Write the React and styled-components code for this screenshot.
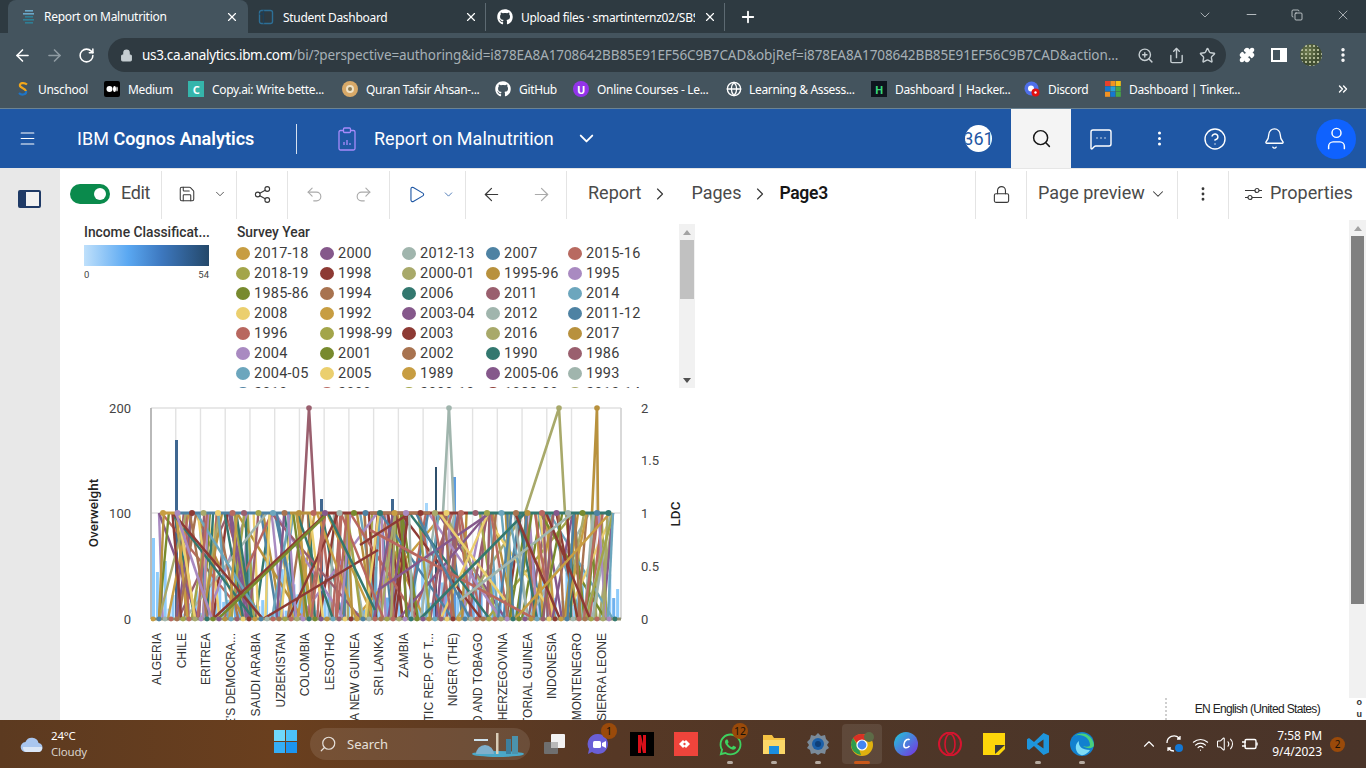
import React from 'react';
import styled, { createGlobalStyle } from 'styled-components';
import {
  ArrowLeft, ArrowRight, Bell, ChevronDown, ChevronRight, ChevronUp, CircleHelp, Copy, EllipsisVertical,
  Lock, Menu, Minus, Play, Plus, Puzzle, Redo2, RotateCw, Save, Search, Share, Share2,
  Star, Undo2, User, Volume2, Wifi, X, ZoomIn, MessageSquareMore, ChevronsRight, Globe,
} from 'lucide-react';
import { FaGithub, FaWhatsapp } from 'react-icons/fa';

const Global = createGlobalStyle`
  html, body { margin: 0; padding: 0; background: #fff; overflow: hidden; }
  * { box-sizing: border-box; }
  #root { width: 1366px; height: 768px; }
`;

const CHROME_FONT = '"Noto Sans", "Open Sans", sans-serif';
const PLEX_FONT = 'Roboto, "Noto Sans", sans-serif';

const Page = styled.div`
  width: 1366px;
  height: 768px;
  display: flex;
  flex-direction: column;
  overflow: hidden;
  position: relative;
  font-family: ${PLEX_FONT};
`;

/* browser chrome */
const TabStrip = styled.div`
  height: 33px;
  flex: none;
  background: #2e3a41;
  display: flex;
  align-items: flex-end;
  padding-left: 8px;
  color: #fff;
  font-family: ${CHROME_FONT};
`;
const Tab = styled.div`
  width: ${(p) => p.$w}px;
  height: ${(p) => (p.$active ? 33 : 28)}px;
  margin-bottom: ${(p) => (p.$active ? 0 : 2)}px;
  background: ${(p) => (p.$active ? '#44545e' : 'transparent')};
  border-radius: ${(p) => (p.$active ? '8px 8px 0 0' : 0)};
  border-right: ${(p) => (p.$sep ? '1px solid #5d6a72' : 'none')};
  display: flex;
  align-items: center;
  padding: 0 ${(p) => (p.$active ? 9 : 7)}px 0 ${(p) => p.$pl || 10}px;
  gap: ${(p) => p.$gap || 8}px;
  font-size: 12px;
  letter-spacing: -0.3px;
`;
const TabTitle = styled.span`
  flex: 1;
  white-space: nowrap;
  overflow: hidden;
`;
const NewTab = styled.div`
  width: 46px;
  display: flex;
  justify-content: center;
  padding-bottom: 7px;
`;
const WindowControls = styled.div`
  margin-left: auto;
  display: flex;
  height: 33px;
  align-items: center;
  padding-bottom: 4px;
`;
const WindowButton = styled.div`
  width: 46px;
  display: flex;
  justify-content: center;
  color: #e2e6e8;
`;
const BrowserBar = styled.div`
  height: 39px;
  flex: none;
  background: #44545e;
  display: flex;
  align-items: flex-start;
  padding-top: 5px;
  color: #fff;
`;
const NavButton = styled.div`
  width: 32px;
  height: 34px;
  display: flex;
  align-items: center;
  justify-content: center;
  color: ${(p) => p.$color || '#fff'};
`;
const NavButtons = styled.div`
  display: flex;
  padding-left: 6px;
  width: 108px;
`;
const UrlBox = styled.div`
  width: 1118px;
  height: 34px;
  border-radius: 17px;
  background: #2f3a41;
  display: flex;
  align-items: center;
  padding-left: 12px;
  font-family: ${CHROME_FONT};
  font-size: 13.5px;
  color: #a6b0b6;
  gap: 9px;
`;
const UrlText = styled.div`
  width: 978px;
  white-space: nowrap;
  letter-spacing: -0.09px;
`;
const UrlHost = styled.span`
  color: #fff;
  letter-spacing: -0.33px;
`;
const UrlIcons = styled.div`
  display: flex;
  gap: 14px;
  align-items: center;
  padding-left: 8px;
  color: #c6ced2;
`;
const BarActions = styled.div`
  display: flex;
  padding-left: 5px;
`;
const ProfilePic = styled.div`
  width: 22px;
  height: 22px;
  border-radius: 50%;
  background:
    radial-gradient(circle at 2px 2px, #aeb693 0.8px, transparent 1.3px) 0 0 / 4px 4px,
    radial-gradient(circle at 35% 35%, #6f7c50, #3d4a2f 60%, #5c6648);
`;
const Bookmarks = styled.div`
  height: 36px;
  flex: none;
  background: #44545e;
  display: flex;
  align-items: center;
  padding: 0 0 2px 17px;
  gap: 16px;
  color: #fff;
  font-family: ${CHROME_FONT};
  font-size: 12px;
  letter-spacing: -0.33px;
`;
const Bookmark = styled.div`
  display: flex;
  align-items: center;
  gap: ${(p) => p.$gap || 8}px;
`;
const BookmarkLabel = styled.span`
  display: block;
  width: ${(p) => p.$w}px;
  white-space: nowrap;
`;
const MoreBookmarks = styled.div`
  margin-left: auto;
  padding-right: 16px;
  display: flex;
`;
const FaviconBox = styled.div`
  width: ${(p) => p.$w || 16}px;
  height: 16px;
  flex: none;
  display: flex;
  align-items: center;
  justify-content: center;
  background: ${(p) => p.$bg || 'transparent'};
  border-radius: ${(p) => p.$r || 0}px;
  color: ${(p) => p.$fg || '#fff'};
  font-size: 11px;
  font-weight: 700;
`;

/* IBM header */
const Header = styled.header`
  height: 60px;
  flex: none;
  background: #1f57a4;
  border-top: 1px solid #6b8393;
  color: #fff;
  display: flex;
  align-items: center;
`;
const HeaderMenu = styled.div`
  width: 54px;
  display: flex;
  justify-content: center;
`;
const Brand = styled.div`
  width: 242px;
  padding-left: 23px;
  font-size: 18px;
  letter-spacing: 0.02px;
  b { font-weight: 600; }
`;
const HeaderRule = styled.div`
  width: 1px;
  height: 30px;
  background: #d5e0ef;
`;
const ReportTitle = styled.div`
  display: flex;
  align-items: center;
  padding-left: 41px;
  font-size: 18px;
  gap: 18px;
  letter-spacing: 0.03px;
`;
const TitleChevron = styled(ChevronDown)`
  margin-left: 3px;
`;
const HeaderRight = styled.div`
  margin-left: auto;
  display: flex;
  align-items: center;
  height: 100%;
`;
const CountBadge = styled.div`
  width: 27px;
  height: 27px;
  border-radius: 50%;
  background: #fff;
  color: #1f57a4;
  font-size: 18px;
  line-height: 27px;
  display: flex;
  justify-content: center;
  overflow: hidden;
  margin-right: 19px;
`;
const HeaderButton = styled.div`
  width: ${(p) => p.$w || 60}px;
  height: 100%;
  display: flex;
  align-items: center;
  justify-content: center;
  background: ${(p) => (p.$active ? '#f4f4f4' : 'transparent')};
  color: ${(p) => (p.$active ? '#161616' : '#fff')};
`;
const Avatar = styled.div`
  width: 40px;
  height: 40px;
  border-radius: 50%;
  background: #0f62fe;
  display: flex;
  align-items: center;
  justify-content: center;
  margin: 0 10px 0 11px;
`;

/* workspace */
const Workspace = styled.div`
  height: 552px;
  flex: none;
  display: flex;
  position: relative;
`;
const Rail = styled.div`
  width: 60px;
  flex: none;
  background: #e8e8e8;
  display: flex;
  justify-content: center;
  padding: 22px 1px 0 0;
`;
const PanelIcon = styled.div`
  width: 23px;
  height: 18px;
  border: 2px solid #1f3a66;
  border-left-width: 8px;
  border-radius: 2px;
  background: #f1f1f1;
`;
const Main = styled.div`
  flex: 1;
  min-width: 0;
  display: flex;
  flex-direction: column;
`;
const Toolbar = styled.div`
  height: 52px;
  flex: none;
  display: flex;
  border-top: 1px solid #e6e6e6;
  padding-top: 2px;
  color: #393939;
`;
const ToolGroup = styled.div`
  width: ${(p) => p.$w}px;
  flex: ${(p) => (p.$grow ? 1 : 'none')};
  height: 48px;
  display: flex;
  align-items: center;
  justify-content: ${(p) => p.$justify || 'flex-start'};
  gap: ${(p) => p.$gap || 0}px;
  padding: 0 0 2px ${(p) => p.$pl || 0}px;
  border-right: ${(p) => (p.$noBorder ? 'none' : '1px solid #e4e4e4')};
  font-size: 18px;
`;
const Toggle = styled.div`
  width: 40px;
  height: 20px;
  border-radius: 10px;
  background: #0a8a4c;
  position: relative;
  margin-right: 11px;
  &::after {
    content: '';
    position: absolute;
    right: 4px;
    top: 4px;
    width: 12px;
    height: 12px;
    border-radius: 50%;
    background: #fff;
  }
`;
const Crumb = styled.span`
  color: ${(p) => (p.$current ? '#161616' : '#4a4a4a')};
  font-weight: ${(p) => (p.$current ? 600 : 400)};
  font-size: ${(p) => (p.$current ? 17.5 : 18)}px;
  letter-spacing: ${(p) => (p.$current ? '-0.3px' : 0)};
  margin-bottom: 3px;
`;
const CrumbChevron = styled(ChevronRight)`
  margin-right: ${(p) => p.$after || 0}px;
`;
const ToolLabel = styled.span`
  color: #4a4a4a;
  letter-spacing: ${(p) => p.$track || 0}px;
  margin-bottom: 3px;
`;
const Body = styled.div`
  flex: 1;
  display: flex;
  min-height: 0;
`;
const ReportPage = styled.div`
  flex: 1;
  min-width: 0;
  padding: 2px 0 0 10px;
  overflow: hidden;
`;
const LegendPanel = styled.div`
  width: 625px;
  height: 166px;
  display: flex;
  overflow: hidden;
`;
const ColorLegend = styled.div`
  width: 167px;
  padding: 2px 0 0 14px;
  flex: none;
`;
const LegendTitle = styled.div`
  font-size: 13.8px;
  line-height: 16px;
  color: #333;
  font-weight: 500;
  white-space: nowrap;
`;
const Ramp = styled.div`
  width: 125px;
  height: 21px;
  margin-top: 5px;
  background: linear-gradient(90deg, #bfe0fb, #5aa8f2 35%, #3d78bf 62%, #24486a);
`;
const RampScale = styled.div`
  width: 125px;
  display: flex;
  justify-content: space-between;
  font-size: 9.5px;
  color: #444;
  margin-top: 3px;
`;
const SeriesLegend = styled.div`
  flex: 1;
  padding-top: 2px;
  min-width: 0;
`;
const SeriesGrid = styled.div`
  display: grid;
  grid-template-columns: 84px 82px 84px 82px 84px;
  grid-auto-rows: 20px;
  margin: 3px 0 0 -1px;
`;
const SeriesItem = styled.div`
  display: flex;
  align-items: center;
  gap: 4px;
  font-size: 14.5px;
  letter-spacing: 0.25px;
  color: #3d3d3d;
  white-space: nowrap;
`;
const SeriesDot = styled.span`
  width: 14px;
  height: 13px;
  border-radius: 50%;
  background: ${(p) => p.$color};
  flex: none;
`;
const LegendScroll = styled.div`
  width: 16px;
  flex: none;
  background: #f1f1f1;
  display: flex;
  flex-direction: column;
  align-items: center;
  margin-top: 2px;
`;
const Arrow = styled.div`
  width: 0;
  height: 0;
  flex: none;
  border-left: 4px solid transparent;
  border-right: 4px solid transparent;
  ${(p) => (p.$up ? 'border-bottom: 5px solid #a3a3a3;' : 'border-top: 5px solid #505050;')}
  margin: ${(p) => (p.$up ? '6px 0 5px' : 'auto 0 5px')};
`;
const LegendThumb = styled.div`
  width: 14px;
  height: 59px;
  background: #c1c1c1;
`;
const ChartWrap = styled.div`
  margin: 7px 0 0 10px;
`;
const ChartSvg = styled.svg`
  display: block;
`;
const PageScroll = styled.div`
  width: 17px;
  height: 478px;
  flex: none;
  background: #f1f1f1;
  display: flex;
  flex-direction: column;
  align-items: center;
`;
const PageThumb = styled.div`
  width: 13px;
  height: 368px;
  background: #808080;
`;
const Status = styled.div`
  position: absolute;
  right: 46px;
  bottom: 4px;
  font: 12px "Liberation Sans", sans-serif;
  letter-spacing: -0.67px;
  color: #222;
  white-space: nowrap;
`;
const Dotted = styled.div`
  position: absolute;
  left: 1165px;
  bottom: 0;
  height: 22px;
  border-left: 2px dotted #cfcfcf;
`;
const CornerMarks = styled.div`
  position: absolute;
  right: 4px;
  bottom: 2px;
  height: 20px;
  display: flex;
  flex-direction: column;
  justify-content: space-between;
  font: 700 9px "Liberation Sans", sans-serif;
  color: #333;
  line-height: 8px;
`;

/* taskbar */
const Taskbar = styled.footer`
  height: 48px;
  flex: none;
  background: linear-gradient(90deg, #5c3a20 0%, #6a3f1e 20%, #563825 45%, #4d3628 70%, #4a3429 100%);
  display: flex;
  align-items: center;
  color: #fff;
  font-family: ${CHROME_FONT};
`;
const Weather = styled.div`
  width: 274px;
  padding-left: 20px;
  display: flex;
  align-items: center;
  gap: 7px;
  font-size: 11.5px;
  line-height: 16px;
  letter-spacing: -0.2px;
`;
const WeatherSub = styled.div`
  color: #d9d2cb;
`;
const StartButton = styled.div`
  width: 36px;
`;
const SearchPill = styled.div`
  width: 220px;
  height: 32px;
  border-radius: 16px;
  background: rgba(255, 255, 255, 0.1);
  display: flex;
  align-items: center;
  padding-left: 9px;
  gap: 10px;
  font-size: 13px;
  color: #e6e0da;
  position: relative;
`;
const SearchGlass = styled(Search)`
  transform: scaleX(-1);
`;
const SearchArt = styled.div`
  position: absolute;
  right: 4px;
  top: 2px;
`;
const TaskIcons = styled.div`
  display: flex;
  margin-left: 2px;
`;
const TaskSlot = styled.div`
  width: ${(p) => (p.$active ? 40 : 44)}px;
  margin: 0 ${(p) => (p.$active ? 2 : 0)}px;
  height: 40px;
  display: flex;
  align-items: center;
  justify-content: center;
  position: relative;
  border-radius: 4px;
  background: ${(p) => (p.$active ? 'rgba(255,255,255,0.09)' : 'transparent')};
  &::after {
    content: '';
    display: ${(p) => (p.$dot ? 'block' : 'none')};
    position: absolute;
    left: 50%;
    bottom: 0;
    transform: translateX(-50%);
    width: ${(p) => (p.$active ? 16 : 6)}px;
    height: 3px;
    border-radius: 2px;
    background: ${(p) => (p.$active ? '#c8581a' : '#b5aaa0')};
  }
`;
const CountPip = styled.span`
  position: absolute;
  top: ${(p) => p.$top || 0}px;
  right: ${(p) => p.$right || 4}px;
  min-width: 16px;
  height: 16px;
  padding: 0 2px;
  border-radius: 8px;
  background: #9a4a0a;
  color: #1a1208;
  font-size: 10.5px;
  line-height: 16px;
  text-align: center;
`;
const Tray = styled.div`
  margin-left: auto;
  display: flex;
  align-items: center;
  gap: 7px;
  color: #fff;
`;
const Clock = styled.div`
  width: 50px;
  text-align: right;
  font-size: 12px;
  line-height: 16px;
  letter-spacing: -0.05px;
  margin-left: 6px;
`;
const TrayBadge = styled.div`
  width: 15px;
  height: 15px;
  border-radius: 50%;
  background: #9a4a0a;
  color: #1a1208;
  font-size: 10px;
  line-height: 15px;
  text-align: center;
  margin: 0 21px 0 1px;
`;

/* data */
const PALETTE = [
  '#c79d42', '#a3a54a', '#788a2e', '#ebcf6e', '#b8675f', '#a98ac1', '#6ca6bd',
  '#4e82a3', '#b86a60', '#85588b', '#8d3a34', '#a87350', '#33786f', '#9a5f6e', '#a0b5ad', '#a8a96a', '#b8913d',
];

const LEGEND_ROWS = [
  [['2017-18', 0], ['2000', 9], ['2012-13', 14], ['2007', 7], ['2015-16', 8]],
  [['2018-19', 1], ['1998', 10], ['2000-01', 15], ['1995-96', 16], ['1995', 5]],
  [['1985-86', 2], ['1994', 11], ['2006', 12], ['2011', 13], ['2014', 6]],
  [['2008', 3], ['1992', 0], ['2003-04', 9], ['2012', 14], ['2011-12', 7]],
  [['1996', 4], ['1998-99', 1], ['2003', 10], ['2016', 15], ['2017', 16]],
  [['2004', 5], ['2001', 2], ['2002', 11], ['1990', 12], ['1986', 13]],
  [['2004-05', 6], ['2005', 3], ['1989', 0], ['2005-06', 9], ['1993', 14]],
  [['2010', 7], ['2009', 4], ['2009-10', 1], ['1988-89', 10], ['2013-14', 15]],
];

const COUNTRIES = [
  'ALGERIA', 'CHILE', 'ERITREA', "LAO PEOPLE'S DEMOCRA...", 'SAUDI ARABIA', 'UZBEKISTAN', 'COLOMBIA', 'LESOTHO',
  'PAPUA NEW GUINEA', 'SRI LANKA', 'ZAMBIA', 'DEMOCRATIC REP. OF T...', 'NIGER (THE)', 'TRINIDAD AND TOBAGO',
  'BOSNIA AND HERZEGOVINA', 'EQUATORIAL GUINEA', 'INDONESIA', 'MONTENEGRO', 'SIERRA LEONE',
];

const PLOT = { left: 151, right: 621, top: 408, mid: 513, bottom: 619 };

// small seeded generator so the tangle of lines is the same on every load
function makeRandom(seed) {
  let s = seed;
  return () => {
    s = (s * 16807) % 2147483647;
    return (s - 1) / 2147483646;
  };
}

const rand = makeRandom(4711);

const lightBars = Array.from({ length: 120 }, (_, i) => {
  const x = PLOT.left + 1 + i * 3.9;
  const near = i < 4 ? [81, 47, 72, 58][i] : rand() < 0.55 ? 15 + rand() * 55 : rand() * 20;
  return { x, h: near, color: rand() > 0.75 ? '#6fb1ee' : '#8ecbfb' };
});

const DARK_BARS = [
  { x: 175, w: 3, top: 440, color: '#3f6790' },
  { x: 320, w: 3, top: 499, color: '#3f6790' },
  { x: 391, w: 3, top: 499, color: '#3f6790' },
  { x: 435, w: 2, top: 467, color: '#2f506c' },
  { x: 453, w: 3, top: 477, color: '#5b9bdf' },
  { x: 425, w: 3, top: 503, color: '#a5d6fb' },
];

// mostly steep 0-100 strokes, some long diagonals
const tangle = Array.from({ length: 250 }, (_, i) => {
  const x1 = PLOT.left + 10 + rand() * 450;
  const span = rand() < 0.8 ? 2 + rand() * 20 : 30 + rand() * 60;
  const x2 = Math.min(PLOT.right - 8, x1 + (rand() > 0.5 ? span : -span));
  const up = rand() > 0.5;
  return {
    x1,
    x2: Math.max(PLOT.left + 8, x2),
    y1: up ? PLOT.mid : PLOT.bottom,
    y2: up ? PLOT.bottom : PLOT.mid,
    color: PALETTE[i % PALETTE.length],
  };
});

const DIAGONALS = [
  [173, 513, 263, 619, '#8d3a34'], [213, 619, 327, 513, '#8d3a34'], [218, 619, 325, 516, '#788a2e'],
  [263, 619, 378, 550, '#8d3a34'], [328, 513, 375, 610, '#33786f'], [176, 513, 212, 619, '#a98ac1'],
  [378, 590, 490, 513, '#85588b'], [370, 530, 535, 619, '#b8675f'], [416, 513, 470, 619, '#4e82a3'],
  [439, 513, 505, 600, '#ebcf6e'], [420, 619, 525, 513, '#33786f'], [460, 600, 573, 513, '#a0b5ad'],
  [515, 513, 560, 619, '#8d3a34'], [515, 619, 610, 513, '#c79d42'], [360, 545, 410, 513, '#8d3a34'],
];

const SPIKES = [
  { x: 309, points: '303,513 309,408 315,513', color: '#9a5f6e' },
  { x: 449, points: '443,513 449,408 454,513', color: '#a0b5ad' },
  { x: 559, points: '525,513 559,408 565,513', color: '#a8a96a' },
  { x: 597, points: '592,513 597,408 598,513', color: '#b8913d' },
];

const MID_SEGMENTS = [
  [163, 175, '#c79d42'], [175, 290, '#4e82a3'], [290, 328, '#b8913d'], [328, 468, '#8d3a34'],
  [468, 610, '#33786f'], [370, 430, '#a87350'],
];

const midDots = Array.from({ length: 34 }, (_, i) => ({
  x: 163 + i * 13.5 + (i % 3),
  color: PALETTE[(i * 5) % PALETTE.length],
}));
const baseDots = Array.from({ length: 78 }, (_, i) => ({
  x: 153 + i * 6,
  color: PALETTE[(i * 7) % PALETTE.length],
}));

const grid = Array.from({ length: 20 }, (_, i) => PLOT.left + (i * 470) / 19);

function Chart() {
  return (
    <ChartSvg width="620" height="325" viewBox="80 395 620 325">
      {grid.map((x) => (
        <line key={x} x1={x} x2={x} y1={PLOT.top} y2={PLOT.bottom} stroke="#e2e2e2" strokeWidth="1.4" />
      ))}
      <line x1={PLOT.left} x2={PLOT.right} y1={PLOT.top} y2={PLOT.top} stroke="#e0e0e0" strokeWidth="1.4" />
      <line x1={PLOT.left} x2={PLOT.right} y1={PLOT.mid} y2={PLOT.mid} stroke="#e0e0e0" strokeWidth="1.4" />
      <line x1={PLOT.left} x2={PLOT.left} y1={PLOT.top} y2={PLOT.bottom} stroke="#a8a8a8" strokeWidth="1.5" />
      <line x1={PLOT.right} x2={PLOT.right} y1={PLOT.top} y2={PLOT.bottom} stroke="#c8c8c8" />

      {lightBars.map((b) => (
        <rect key={b.x} x={b.x} y={PLOT.bottom - b.h} width="3" height={b.h} fill={b.color} />
      ))}
      {DARK_BARS.map((b) => (
        <rect key={b.x} x={b.x} y={b.top} width={b.w} height={PLOT.bottom - b.top} fill={b.color} />
      ))}

      {tangle.map((l, i) => (
        <line key={i} x1={l.x1} y1={l.y1} x2={l.x2} y2={l.y2} stroke={l.color} strokeWidth="2.4" />
      ))}
      {DIAGONALS.map(([x1, y1, x2, y2, color], i) => (
        <line key={i} x1={x1} y1={y1} x2={x2} y2={y2} stroke={color} strokeWidth="2.6" />
      ))}
      {SPIKES.map((s) => (
        <g key={s.points}>
          <polyline points={s.points} fill="none" stroke={s.color} strokeWidth="2.6" />
          <circle cx={s.x} cy={PLOT.top} r="2.8" fill={s.color} />
        </g>
      ))}
      {MID_SEGMENTS.map(([x1, x2, color]) => (
        <line key={x1} x1={x1} x2={x2} y1={PLOT.mid} y2={PLOT.mid} stroke={color} strokeWidth="3" />
      ))}
      {midDots.map((d) => (
        <circle key={d.x} cx={d.x} cy={PLOT.mid} r="3" fill={d.color} />
      ))}
      <line x1={PLOT.left} x2={PLOT.right} y1={PLOT.bottom} y2={PLOT.bottom} stroke="#8e8f6e" strokeWidth="3" />
      {baseDots.map((d) => (
        <circle key={d.x} cx={d.x} cy={PLOT.bottom} r="2.4" fill={d.color} />
      ))}

      <g fontFamily="Roboto, sans-serif" fontSize="13" fill="#444" textAnchor="end">
        <text x="131" y="413">200</text>
        <text x="131" y="518">100</text>
        <text x="131" y="624">0</text>
      </g>
      <g fontFamily="Roboto, sans-serif" fontSize="13" fill="#444">
        <text x="641" y="413">2</text>
        <text x="641" y="465">1.5</text>
        <text x="641" y="518">1</text>
        <text x="641" y="571">0.5</text>
        <text x="641" y="624">0</text>
      </g>
      <text
        transform="translate(98 513) rotate(-90)"
        textAnchor="middle"
        fontFamily="Roboto, sans-serif"
        fontWeight="500"
        fontSize="13.5"
        fill="#222"
      >
        Overweight
      </text>
      <text
        transform="translate(680 514) rotate(-90)"
        textAnchor="middle"
        fontFamily="Roboto, sans-serif"
        fontWeight="500"
        fontSize="13.5"
        fill="#222"
      >
        LDC
      </text>
      {COUNTRIES.map((name, i) => (
        <text
          key={name}
          transform={`translate(${161 + i * 24.7} 633) rotate(-90)`}
          textAnchor="end"
          fontFamily="Liberation Sans, sans-serif"
          fontSize="12"
          fill="#333"
        >
          {name}
        </text>
      ))}
    </ChartSvg>
  );
}

/* small drawn icons */
const IbmFavicon = () => (
  <svg width="16" height="16" viewBox="0 0 16 16">
    {[2, 5, 8, 11, 14].map((y, i) => (
      <rect key={y} x={i % 2 ? 3 : 5} y={y - 1} width={i % 2 ? 11 : 8} height="1.6" fill={i < 2 ? '#6ba8c9' : '#2f7f95'} />
    ))}
  </svg>
);
const DashFavicon = () => (
  <svg width="16" height="16" viewBox="0 0 16 16" fill="none" stroke="#2d6f96" strokeWidth="1.4">
    <rect x="1.5" y="1.5" width="13" height="13" rx="2" />
    <path d="M1.5 5h4M5.5 1.5v13" stroke="#1d3f58" />
  </svg>
);
const SchoolMark = () => (
  <svg width="12" height="16" viewBox="0 0 12 16" fill="none" strokeWidth="2.2">
    <path d="M10 3.5C7 1 2 2 3 5c.8 2 5 2 6 5" stroke="#f2a71b" />
    <path d="M9 10c1 3-4 5-7 2" stroke="#1e74c6" />
  </svg>
);
const ReportIcon = () => (
  <svg width="18" height="24" viewBox="0 0 18 24" fill="none" stroke="#a78bfa" strokeWidth="1.3">
    <rect x="1" y="3.5" width="16" height="19.5" rx="1.5" />
    <rect x="5.5" y="1" width="7" height="4.5" rx="1" fill="#1f57a4" />
    <path d="M6 18v-3M9 18v-5M12 18v-2" />
  </svg>
);
const PropertiesIcon = () => (
  <svg width="19" height="16" viewBox="0 0 19 16" fill="none" stroke="#393939" strokeWidth="1.2">
    <path d="M1 4.5h10M15 4.5h3M1 11.5h3M8 11.5h10" />
    <circle cx="13" cy="4.5" r="2" />
    <circle cx="6" cy="11.5" r="2" />
  </svg>
);
const TaskPic = ({ children }) => (
  <svg width="24" height="24" viewBox="0 0 24 24">
    {children}
  </svg>
);

const ICON_LINE = 1.4;

export default function App() {
  return (
    <Page>
      <Global />
      <TabStrip>
        <Tab $active $w={240} $pl={12} $gap={8}>
          <IbmFavicon />
          <TabTitle>Report on Malnutrition</TabTitle>
          <X size={14} />
        </Tab>
        <Tab $w={238} $sep $gap={9}>
          <DashFavicon />
          <TabTitle>Student Dashboard</TabTitle>
          <X size={14} />
        </Tab>
        <Tab $w={239} $sep $pl={11}>
          <FaGithub size={16} />
          <TabTitle>Upload files · smartinternz02/SBS</TabTitle>
          <X size={14} />
        </Tab>
        <NewTab>
          <Plus size={18} strokeWidth={2.4} />
        </NewTab>
        <WindowControls>
          <WindowButton>
            <ChevronDown size={16} strokeWidth={1} />
          </WindowButton>
          <WindowButton>
            <Minus size={15} strokeWidth={1.2} />
          </WindowButton>
          <WindowButton>
            <Copy size={12} strokeWidth={1.5} />
          </WindowButton>
          <WindowButton>
            <X size={16} strokeWidth={1} />
          </WindowButton>
        </WindowControls>
      </TabStrip>

      <BrowserBar>
        <NavButtons>
          <NavButton>
            <ArrowLeft size={19} strokeWidth={2} />
          </NavButton>
          <NavButton $color="#8f9ba2">
            <ArrowRight size={19} strokeWidth={2} />
          </NavButton>
          <NavButton>
            <RotateCw size={17} strokeWidth={2.2} />
          </NavButton>
        </NavButtons>
        <UrlBox>
          <Lock size={13} color="#c6ced2" fill="#c6ced2" />
          <UrlText>
            <UrlHost>us3.ca.analytics.ibm.com</UrlHost>
            /bi/?perspective=authoring&id=i878EA8A1708642BB85E91EF56C9B7CAD&objRef=i878EA8A1708642BB85E91EF56C9B7CAD&action...
          </UrlText>
          <UrlIcons>
            <ZoomIn size={17} />
            <Share size={17} />
            <Star size={17} />
          </UrlIcons>
        </UrlBox>
        <BarActions>
          <NavButton>
            <Puzzle size={16} fill="#fff" />
          </NavButton>
          <NavButton>
            <svg width="16" height="14" viewBox="0 0 16 14">
              <rect x="1" y="1" width="14" height="12" fill="none" stroke="#fff" strokeWidth="2" />
              <rect x="9" y="1" width="6" height="12" fill="#fff" />
            </svg>
          </NavButton>
          <NavButton>
            <ProfilePic />
          </NavButton>
          <NavButton>
            <EllipsisVertical size={18} strokeWidth={2.6} />
          </NavButton>
        </BarActions>
      </BrowserBar>

      <Bookmarks>
        <Bookmark $gap={9}>
          <FaviconBox $w={12}>
            <SchoolMark />
          </FaviconBox>
          <BookmarkLabel $w={50}>Unschool</BookmarkLabel>
        </Bookmark>
        <Bookmark>
          <FaviconBox $bg="#000" $r={2}>
            <svg width="12" height="8" viewBox="0 0 12 8" fill="#fff">
              <circle cx="3.5" cy="4" r="3" />
              <ellipse cx="8.5" cy="4" rx="1.5" ry="3" />
              <ellipse cx="11" cy="4" rx="0.7" ry="2.6" />
            </svg>
          </FaviconBox>
          <BookmarkLabel $w={44}>Medium</BookmarkLabel>
        </Bookmark>
        <Bookmark>
          <FaviconBox $bg="#35b5ab">C</FaviconBox>
          <BookmarkLabel $w={114}>Copy.ai: Write bette...</BookmarkLabel>
        </Bookmark>
        <Bookmark>
          <FaviconBox $bg="#d8a968" $r={8}>
            <svg width="10" height="10" viewBox="0 0 10 10">
              <circle cx="5" cy="5" r="4" fill="#efe2c6" />
              <circle cx="5" cy="5" r="2" fill="#8d7a52" />
            </svg>
          </FaviconBox>
          <BookmarkLabel $w={113}>Quran Tafsir Ahsan-...</BookmarkLabel>
        </Bookmark>
        <Bookmark>
          <FaGithub size={16} />
          <BookmarkLabel $w={38}>GitHub</BookmarkLabel>
        </Bookmark>
        <Bookmark>
          <FaviconBox $bg="#9333ea" $r={8}>U</FaviconBox>
          <BookmarkLabel $w={113}>Online Courses - Le...</BookmarkLabel>
        </Bookmark>
        <Bookmark $gap={7}>
          <Globe size={16} />
          <BookmarkLabel $w={106}>Learning & Assess...</BookmarkLabel>
        </Bookmark>
        <Bookmark>
          <FaviconBox $bg="#0e141e" $fg="#39d67a">H</FaviconBox>
          <BookmarkLabel $w={113}>Dashboard | Hacker...</BookmarkLabel>
        </Bookmark>
        <Bookmark>
          <FaviconBox>
            <svg width="16" height="16" viewBox="0 0 16 16">
              <circle cx="7.5" cy="7.5" r="7" fill="#4f6fe8" />
              <circle cx="7" cy="7.5" r="3" fill="#fff" />
              <circle cx="11.5" cy="11.5" r="4" fill="#e11010" />
              <circle cx="11.5" cy="11.5" r="1.2" fill="#fff" />
            </svg>
          </FaviconBox>
          <BookmarkLabel $w={41}>Discord</BookmarkLabel>
        </Bookmark>
        <Bookmark>
          <FaviconBox>
            <svg width="16" height="16" viewBox="0 0 16 16">
              {['#e8402a', '#f29222', '#f6c313', '#1477d1', '#28a2d8', '#48a846', '#f29222', '#1477d1', '#48a846'].map((c, i) => (
                <rect key={i} x={(i % 3) * 5.4} y={Math.floor(i / 3) * 5.4} width="5" height="5" fill={c} />
              ))}
            </svg>
          </FaviconBox>
          <BookmarkLabel $w={109}>Dashboard | Tinker...</BookmarkLabel>
        </Bookmark>
        <MoreBookmarks>
          <ChevronsRight size={14} strokeWidth={2.4} />
        </MoreBookmarks>
      </Bookmarks>

      <Header>
        <HeaderMenu>
          <Menu size={19} strokeWidth={1.4} />
        </HeaderMenu>
        <Brand>
          IBM <b>Cognos Analytics</b>
        </Brand>
        <HeaderRule />
        <ReportTitle>
          <ReportIcon />
          <span>Report on Malnutrition</span>
          <TitleChevron size={23} strokeWidth={2} />
        </ReportTitle>
        <HeaderRight>
          <CountBadge>361</CountBadge>
          <HeaderButton $active>
            <Search size={21} strokeWidth={1.7} />
          </HeaderButton>
          <HeaderButton>
            <MessageSquareMore size={24} strokeWidth={1.4} />
          </HeaderButton>
          <HeaderButton $w={56}>
            <EllipsisVertical size={19} strokeWidth={1.8} />
          </HeaderButton>
          <HeaderButton $w={56}>
            <CircleHelp size={24} strokeWidth={1.4} />
          </HeaderButton>
          <HeaderButton $w={62}>
            <Bell size={23} strokeWidth={1.4} />
          </HeaderButton>
          <Avatar>
            <User size={27} strokeWidth={1.3} />
          </Avatar>
        </HeaderRight>
      </Header>

      <Workspace>
        <Rail>
          <PanelIcon />
        </Rail>
        <Main>
          <Toolbar>
            <ToolGroup $w={102} $pl={10}>
              <Toggle />
              <ToolLabel $track={-0.4}>Edit</ToolLabel>
            </ToolGroup>
            <ToolGroup $w={75} $pl={16} $gap={17}>
              <Save size={18} strokeWidth={ICON_LINE} />
              <ChevronDown size={14} strokeWidth={ICON_LINE} />
            </ToolGroup>
            <ToolGroup $w={51} $justify="center">
              <Share2 size={19} strokeWidth={ICON_LINE} />
            </ToolGroup>
            <ToolGroup $w={102} $justify="center" $gap={30}>
              <Undo2 size={19} strokeWidth={ICON_LINE} color="#aaa" />
              <Redo2 size={19} strokeWidth={ICON_LINE} color="#aaa" />
            </ToolGroup>
            <ToolGroup $w={76} $pl={17} $gap={16}>
              <Play size={19} strokeWidth={ICON_LINE} color="#1f57a4" />
              <ChevronDown size={13} strokeWidth={ICON_LINE} color="#1f57a4" />
            </ToolGroup>
            <ToolGroup $w={101} $pl={15} $gap={29}>
              <ArrowLeft size={21} strokeWidth={ICON_LINE} />
              <ArrowRight size={21} strokeWidth={ICON_LINE} color="#aaa" />
            </ToolGroup>
            <ToolGroup $grow $pl={21} $gap={9}>
              <Crumb>Report</Crumb>
              <CrumbChevron size={20} strokeWidth={ICON_LINE} $after={12} />
              <Crumb>Pages</Crumb>
              <CrumbChevron size={20} strokeWidth={ICON_LINE} />
              <Crumb $current>Page3</Crumb>
            </ToolGroup>
            <ToolGroup $w={51} $justify="center">
              <Lock size={19} strokeWidth={ICON_LINE} />
            </ToolGroup>
            <ToolGroup $w={151} $pl={11} $gap={4}>
              <ToolLabel>Page preview</ToolLabel>
              <ChevronDown size={18} strokeWidth={ICON_LINE} />
            </ToolGroup>
            <ToolGroup $w={51} $justify="center">
              <EllipsisVertical size={18} strokeWidth={1.8} />
            </ToolGroup>
            <ToolGroup $w={137} $pl={15} $gap={7} $noBorder>
              <PropertiesIcon />
              <ToolLabel>Properties</ToolLabel>
            </ToolGroup>
          </Toolbar>
          <Body>
            <ReportPage>
              <LegendPanel>
                <ColorLegend>
                  <LegendTitle>Income Classificat...</LegendTitle>
                  <Ramp />
                  <RampScale>
                    <span>0</span>
                    <span>54</span>
                  </RampScale>
                </ColorLegend>
                <SeriesLegend>
                  <LegendTitle>Survey Year</LegendTitle>
                  <SeriesGrid>
                    {LEGEND_ROWS.flat().map(([label, color], i) => (
                      <SeriesItem key={i}>
                        <SeriesDot $color={PALETTE[color]} />
                        {label}
                      </SeriesItem>
                    ))}
                  </SeriesGrid>
                </SeriesLegend>
                <LegendScroll>
                  <Arrow $up />
                  <LegendThumb />
                  <Arrow />
                </LegendScroll>
              </LegendPanel>
              <ChartWrap>
                <Chart />
              </ChartWrap>
            </ReportPage>
            <PageScroll>
              <Arrow $up />
              <PageThumb />
            </PageScroll>
          </Body>
        </Main>
        <Dotted />
        <Status>EN English (United States)</Status>
        <CornerMarks>
          <span>o</span>
          <span>u</span>
        </CornerMarks>
      </Workspace>

      <Taskbar>
        <Weather>
          <svg width="24" height="18" viewBox="0 0 24 18">
            <path d="M6 17a5 5 0 0 1-.6-10A7 7 0 0 1 18.6 8 4.6 4.6 0 0 1 19 17z" fill="#a9c6ef" />
            <path d="M3 12h19a4 4 0 0 1-3 5H6a5 5 0 0 1-3-5z" fill="#dbe7f7" />
          </svg>
          <div>
            <div>24°C</div>
            <WeatherSub>Cloudy</WeatherSub>
          </div>
        </Weather>
        <StartButton>
          <svg width="23" height="23" viewBox="0 0 23 23">
            <rect x="0" y="0" width="11" height="11" fill="#6fd8fb" />
            <rect x="12" y="0" width="11" height="11" fill="#4cc2fa" />
            <rect x="0" y="12" width="11" height="11" fill="#35aef5" />
            <rect x="12" y="12" width="11" height="11" fill="#1c95f0" />
          </svg>
        </StartButton>
        <SearchPill>
          <SearchGlass size={18} strokeWidth={1.6} />
          Search
          <SearchArt>
            <svg width="56" height="28" viewBox="0 0 56 28">
              <ellipse cx="28" cy="24" rx="26" ry="3" fill="#4aa8c8" />
              <path d="M6 24a9 9 0 0 1 18 0z" fill="#7fb0cc" />
              <rect x="26" y="3" width="2.5" height="21" fill="#d9cdb8" />
              <rect x="36" y="9" width="5" height="15" fill="#3d7f9e" />
              <rect x="42" y="6" width="6" height="18" fill="#4b93ad" />
              <path d="M4 9h14v2H4z" fill="#cfe3ee" />
            </svg>
          </SearchArt>
        </SearchPill>
        <TaskIcons>
          <TaskSlot>
            <TaskPic>
              <rect x="9" y="2" width="14" height="14" rx="1" fill="#f2f2f2" />
              <rect x="2" y="10" width="14" height="12" rx="1" fill="#6f6f6f" />
              <rect x="9" y="10" width="7" height="6" fill="#b9b9b9" />
            </TaskPic>
          </TaskSlot>
          <TaskSlot>
            <TaskPic>
              <path d="M12 2a10 10 0 1 1-6 18l-4 2 1-5A10 10 0 0 1 12 2z" fill="#6a5fd6" />
              <rect x="7" y="9" width="8" height="7" rx="1.5" fill="#fff" />
              <path d="M16 11l4-2v7l-4-2z" fill="#fff" />
            </TaskPic>
            <CountPip $top={-1} $right={3}>1</CountPip>
          </TaskSlot>
          <TaskSlot>
            <TaskPic>
              <rect width="24" height="24" fill="#000" />
              <path d="M8 3h3l2 9V3h3v18h-3l-2-9v9H8z" fill="#d8101a" />
            </TaskPic>
          </TaskSlot>
          <TaskSlot>
            <TaskPic>
              <rect width="24" height="24" fill="#ef443b" />
              <path d="M5 12l4-4 2 2-2 2 2 2-2 2zM12 8l4 4-4 4-2-2 2-2-2-2z" fill="#fff" />
            </TaskPic>
          </TaskSlot>
          <TaskSlot $dot>
            <FaWhatsapp size={25} color="#3ed15f" />
            <CountPip $top={-1} $right={0}>12</CountPip>
          </TaskSlot>
          <TaskSlot $dot>
            <TaskPic>
              <path d="M1 3h9l2 3h11v16H1z" fill="#f5c243" />
              <rect x="1" y="8" width="22" height="14" fill="#fbd768" />
              <rect x="7" y="14" width="10" height="8" fill="#1b8ee0" />
            </TaskPic>
          </TaskSlot>
          <TaskSlot $dot>
            <TaskPic>
              <path d="M12 1l3 3 4-1 1 4 3 3-2 3 2 3-3 2-1 4-4-1-3 2-3-2-4 1-1-4-3-2 2-3-2-3 3-3 1-4 4 1z" fill="#7a8a99" />
              <circle cx="12" cy="12" r="6" fill="#1b5fa8" />
              <circle cx="12" cy="12" r="3" fill="#0f3f78" />
            </TaskPic>
          </TaskSlot>
          <TaskSlot $active $dot>
            <TaskPic>
              <circle cx="12" cy="13" r="11" fill="#e0b10f" />
              <path d="M12 2a11 11 0 0 1 10 6H12a5 5 0 0 0-5 3L3 6a11 11 0 0 1 9-4z" fill="#d93025" />
              <path d="M1 13a11 11 0 0 1 2-7l5 8 3 9A11 11 0 0 1 1 13z" fill="#2e9c4e" />
              <circle cx="12" cy="13" r="5.6" fill="#fff" />
              <circle cx="12" cy="13" r="4.4" fill="#4285f4" />
              <circle cx="19" cy="5" r="5" fill="#5d6b47" />
            </TaskPic>
          </TaskSlot>
          <TaskSlot>
            <TaskPic>
              <defs>
                <linearGradient id="canva" x1="0" y1="0" x2="1" y2="1">
                  <stop offset="0" stopColor="#1fc9d8" />
                  <stop offset="1" stopColor="#7a2fe0" />
                </linearGradient>
              </defs>
              <circle cx="12" cy="12" r="12" fill="url(#canva)" />
              <path d="M15.5 8c-1-1.5-5-.5-5.6 4.5-.4 3.5 2.6 4.5 5.6 1.5" fill="none" stroke="#fff" strokeWidth="1.6" />
            </TaskPic>
          </TaskSlot>
          <TaskSlot>
            <TaskPic>
              <ellipse cx="12" cy="12" rx="11" ry="11.5" fill="none" stroke="#d6142f" strokeWidth="2" />
              <ellipse cx="12" cy="12" rx="5" ry="10" fill="none" stroke="#d6142f" strokeWidth="1.6" />
            </TaskPic>
          </TaskSlot>
          <TaskSlot>
            <TaskPic>
              <path d="M1 1h22v16l-6 6H1z" fill="#fdd60a" />
              <path d="M13 22V13h10z" fill="#3a3a3a" />
            </TaskPic>
          </TaskSlot>
          <TaskSlot $dot>
            <TaskPic>
              <path d="M17.5 1L23 3.5v17L17.5 23 8 14l-5 4-2-1.2v-9.6L3 6l5 4zM17.5 7.5L11 12l6.5 4.5z" fill="#1e95dc" />
            </TaskPic>
          </TaskSlot>
          <TaskSlot $dot>
            <TaskPic>
              <circle cx="12" cy="12" r="12" fill="#1281cf" />
              <path d="M24 13C23 4 13-2 5 4 9 1 20 4 20 13c0 2-4 2-7 1 3 3 11 3 11-1z" fill="#49d07c" />
              <path d="M11 23C5 21 4 12 9 9c-1 5 3 9 11 9-2 3-6 6-9 5z" fill="#7fdcf5" />
            </TaskPic>
          </TaskSlot>
        </TaskIcons>
        <Tray>
          <ChevronUp size={18} strokeWidth={1.5} />
          <svg width="20" height="20" viewBox="0 0 20 20" fill="none" stroke="#fff" strokeWidth="1.3">
            <path d="M2 9a7 7 0 0 1 12-5l1 1M15 2v3h-3M3 17v-3h3M3 14l1 1a7 7 0 0 0 5 2" />
            <circle cx="14" cy="14" r="4" fill="#1478d4" stroke="none" />
          </svg>
          <Wifi size={17} strokeWidth={1.6} />
          <Volume2 size={18} strokeWidth={1.4} />
          <svg width="18" height="14" viewBox="0 0 18 14" fill="none" stroke="#fff" strokeWidth="1.4">
            <rect x="4" y="2.5" width="11" height="9" rx="1.5" />
            <path d="M16 5.5v3M1 5h4M1 9h4" />
          </svg>
          <Clock>
            <div>7:58 PM</div>
            <div>9/4/2023</div>
          </Clock>
          <TrayBadge>2</TrayBadge>
        </Tray>
      </Taskbar>
    </Page>
  );
}
